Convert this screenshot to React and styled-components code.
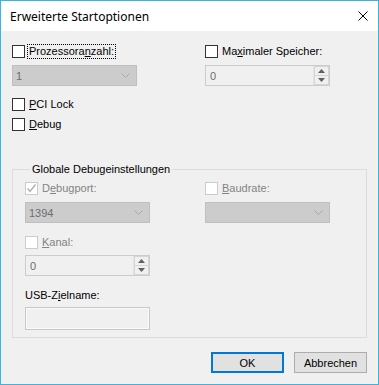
import React from "react";
import styled, { createGlobalStyle } from "styled-components";

const GlobalStyle = createGlobalStyle`
  html, body {
    margin: 0;
    padding: 0;
    background: #f0f0f0;
  }
  * {
    box-sizing: border-box;
  }
`;

const Window = styled.div`
  width: 379px;
  height: 385px;
  border: 1px solid #3fb3dc;
  background: #f0f0f0;
  display: flex;
  flex-direction: column;
  font-family: "Liberation Sans", Arial, sans-serif;
  font-size: 11px;
  color: #000;
`;

const TitleBar = styled.div`
  height: 30px;
  background: #fff;
  display: flex;
  align-items: center;
  justify-content: space-between;
  padding: 0 10px 0 9px;
`;

const Title = styled.span`
  font-family: "Noto Sans", "Open Sans", sans-serif;
  font-size: 12px;
  color: #000;
`;

const Close = styled.svg`
  width: 10px;
  height: 10px;
  display: block;
`;

const Body = styled.div`
  flex: 1;
  display: flex;
  flex-direction: column;
  padding: 14px 11px 0 11px;
`;

const Columns = styled.div`
  display: grid;
  grid-template-columns: ${(p) => p.$first}px 1fr;
`;

const Column = styled.div`
  display: flex;
  flex-direction: column;
  align-items: flex-start;
`;

const CheckRow = styled.label`
  display: flex;
  align-items: center;
  height: 13px;
  margin-top: ${(p) => p.$top || 0}px;
  color: ${(p) => (p.$disabled ? "#838383" : "#000")};
`;

const Box = styled.span`
  width: 13px;
  height: 13px;
  border: 1px solid ${(p) => (p.$disabled ? "#cccccc" : "#333333")};
  background: #fff;
  display: flex;
  align-items: center;
  justify-content: center;
  flex: none;
`;

const LabelText = styled.span`
  margin-left: 3px;
  line-height: 13px;
  padding: 0 1px;
  outline: ${(p) => (p.$focus ? "1px dotted #000" : "none")};
  outline-offset: 0;
`;

const Mn = styled.span`
  text-decoration: underline;
  text-underline-offset: 1px;
`;

const Combo = styled.div`
  width: 125px;
  height: 21px;
  margin-top: ${(p) => p.$top || 0}px;
  background: #cccccc;
  border: 1px solid #bfbfbf;
  display: flex;
  align-items: center;
  justify-content: space-between;
  padding: 0 6px 0 3px;
  color: #6d6d6d;
`;

const Spin = styled.div`
  width: 125px;
  height: 21px;
  margin-top: ${(p) => p.$top || 0}px;
  border: 1px solid #cccccc;
  display: flex;
  color: #6d6d6d;
`;

const SpinValue = styled.div`
  flex: 1;
  display: flex;
  align-items: center;
  padding-left: 4px;
`;

const SpinButtons = styled.div`
  width: 16px;
  display: flex;
  flex-direction: column;
  border-left: 1px solid #e4e4e4;
`;

const SpinButton = styled.div`
  flex: 1;
  display: flex;
  align-items: center;
  justify-content: center;
  border: 1px solid #d6d6d6;
  border-top-width: ${(p) => (p.$down ? 0 : 1)}px;
  background: #f0f0f0;
`;

const Group = styled.fieldset`
  margin: 32px 0 0 0;
  padding: 6px 11px 7px 12px;
  border: 1px solid #dcdcdc;
  min-width: 0;
`;

const Legend = styled.legend`
  margin-left: 5px;
  padding: 0 2px;
  line-height: 13px;
  font-size: 11px;
`;

const PlainLabel = styled.div`
  line-height: 13px;
  margin-top: ${(p) => p.$top || 0}px;
`;

const TextBox = styled.div`
  width: 125px;
  height: 23px;
  margin-top: 5px;
  border: 1px solid #c8c8c8;
  box-shadow: inset 0 0 0 1px #fafafa;
  background: #f0f0f0;
`;

const Footer = styled.div`
  margin-top: auto;
  display: flex;
  justify-content: flex-end;
  gap: 10px;
  padding-bottom: 11px;
`;

const Button = styled.button`
  width: 73px;
  height: 21px;
  padding: 0;
  font-family: "Liberation Sans", Arial, sans-serif;
  font-size: 11px;
  color: #000;
  background: #e1e1e1;
  border: ${(p) => (p.$default ? "2px solid #0078d7" : "1px solid #adadad")};
`;

const Chevron = () => (
  <svg width="9" height="5" viewBox="0 0 9 5">
    <polyline points="0.5,0.5 4.5,4.5 8.5,0.5" fill="none" stroke="#a8a8a8" strokeWidth="1" />
  </svg>
);

const Arrow = ({ down }) => (
  <svg width="7" height="4" viewBox="0 0 7 4">
    <polygon points={down ? "0,0 7,0 3.5,4" : "0,4 7,4 3.5,0"} fill="#606060" />
  </svg>
);

const Check = () => (
  <svg width="11" height="11" viewBox="0 0 11 11">
    <polyline points="1.5,5.5 4,8.5 9.5,1.5" fill="none" stroke="#b0b0b0" strokeWidth="1.4" />
  </svg>
);

const Checkbox = ({ children, disabled, checked, focus, top }) => (
  <CheckRow $disabled={disabled} $top={top}>
    <Box $disabled={disabled}>{checked && <Check />}</Box>
    <LabelText $focus={focus}>{children}</LabelText>
  </CheckRow>
);

const SpinBox = ({ value, top }) => (
  <Spin $top={top}>
    <SpinValue>{value}</SpinValue>
    <SpinButtons>
      <SpinButton>
        <Arrow />
      </SpinButton>
      <SpinButton $down>
        <Arrow down />
      </SpinButton>
    </SpinButtons>
  </Spin>
);

export default function App() {
  return (
    <>
      <GlobalStyle />
      <Window>
        <TitleBar>
          <Title>Erweiterte Startoptionen</Title>
          <Close viewBox="0 0 10 10">
            <path d="M0.5 0.5 L9.5 9.5 M9.5 0.5 L0.5 9.5" stroke="#000" strokeWidth="1" />
          </Close>
        </TitleBar>
        <Body>
          <Columns $first={193}>
            <Column>
              <Checkbox focus>
                Prozessora<Mn>n</Mn>zahl:
              </Checkbox>
              <Combo $top={7}>
                <span>1</span>
                <Chevron />
              </Combo>
              <Checkbox top={12}>
                <Mn>P</Mn>CI Lock
              </Checkbox>
              <Checkbox top={7}>
                <Mn>D</Mn>ebug
              </Checkbox>
            </Column>
            <Column>
              <Checkbox>
                Ma<Mn>x</Mn>imaler Speicher:
              </Checkbox>
              <SpinBox value="0" top={7} />
            </Column>
          </Columns>
          <Group>
            <Legend>Globale Debugeinstellungen</Legend>
            <Columns $first={180}>
              <Column>
                <Checkbox disabled checked>
                  D<Mn>e</Mn>bugport:
                </Checkbox>
                <Combo $top={7}>
                  <span>1394</span>
                  <Chevron />
                </Combo>
                <Checkbox disabled top={13}>
                  <Mn>K</Mn>anal:
                </Checkbox>
                <SpinBox value="0" top={6} />
                <PlainLabel $top={13}>
                  USB-Z<Mn>i</Mn>elname:
                </PlainLabel>
                <TextBox />
              </Column>
              <Column>
                <Checkbox disabled>
                  <Mn>B</Mn>audrate:
                </Checkbox>
                <Combo $top={7}>
                  <span />
                  <Chevron />
                </Combo>
              </Column>
            </Columns>
          </Group>
          <Footer>
            <Button $default>OK</Button>
            <Button>Abbrechen</Button>
          </Footer>
        </Body>
      </Window>
    </>
  );
}
